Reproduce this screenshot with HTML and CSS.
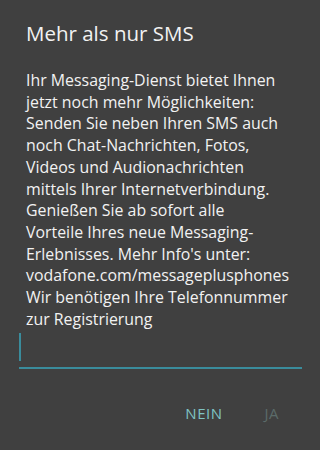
FILE: index.html
```html
<!DOCTYPE html>
<html lang="de">
<head>
<meta charset="utf-8">
<link rel="stylesheet" href="styles.css">
</head>
<body>
<div class="dialog">
  <h1 class="title">Mehr als nur SMS</h1>
  <p class="message">Ihr Messaging-Dienst bietet Ihnen<br>jetzt noch mehr Möglichkeiten:<br>Senden Sie neben Ihren SMS auch<br>noch Chat-Nachrichten, Fotos,<br>Videos und Audionachrichten<br>mittels Ihrer Internetverbindung.<br>Genießen Sie ab sofort alle<br>Vorteile Ihres neue Messaging-<br>Erlebnisses. Mehr Info's unter:<br>vodafone.com/messageplusphones<br>Wir benötigen Ihre Telefonnummer<br>zur Registrierung</p>
  <div class="field"><span class="cursor"></span></div>
  <div class="actions">
    <span class="btn btn-no">NEIN</span>
    <span class="btn btn-yes">JA</span>
  </div>
</div>
</body>
</html>
```
FILE: styles.css
```css
html, body {
  margin: 0;
  padding: 0;
  background: #404040;
}
body {
  width: 320px;
  height: 450px;
  overflow: hidden;
  font-family: "Open Sans", "DejaVu Sans", sans-serif;
  color: #f2f2f2;
}
.dialog {
  padding: 20px 18px 0 19px;
}
.title {
  margin: 0 0 0 7px;
  font-size: 20.5px;
  font-weight: 400;
  line-height: 26px;
}
.message {
  margin: 24px 0 0 7px;
  font-size: 15.9px;
  line-height: 21.7px;
  white-space: nowrap;
}
.field {
  margin-top: 3px;
  height: 34px;
  border-bottom: 2px solid #3a8c9c;
  display: flex;
  align-items: flex-start;
}
.cursor {
  width: 2px;
  height: 28px;
  background: #3a8c9c;
}
.actions {
  display: flex;
  justify-content: flex-end;
  gap: 42px;
  margin-top: 34px;
  padding-right: 23px;
  font-size: 15px;
  letter-spacing: 0.5px;
}
.btn-no {
  color: #7fc3c3;
}
.btn-yes {
  color: #5b6b69;
}
```
